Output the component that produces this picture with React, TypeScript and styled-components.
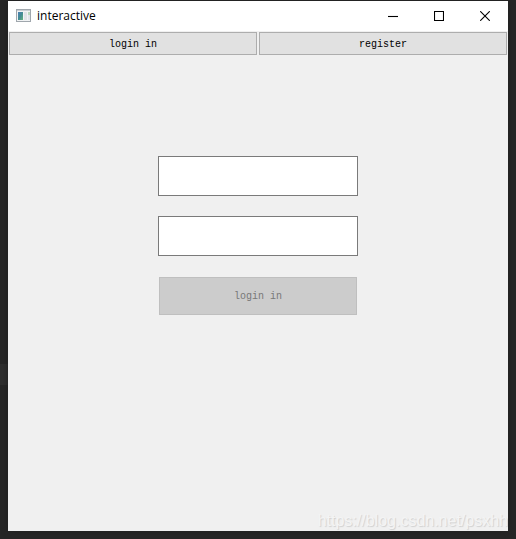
import React from "react";
import styled, { createGlobalStyle } from "styled-components";

const GlobalStyle = createGlobalStyle`
  * { box-sizing: border-box; }
  body { margin: 0; background: #262626; }
`;

const Desktop = styled.div`
  display: flex;
  min-height: 100vh;
  padding: 1px 8px 8px;
  background:
    linear-gradient(#2e2e2e, #2e2e2e) 0 364px / 8px 21px no-repeat,
    #262626;
`;

const AppWindow = styled.main`
  position: relative;
  display: flex;
  flex: 1;
  flex-direction: column;
  min-width: 0;
  overflow: hidden;
  background: #f0f0f0;
  box-shadow: 0 0 6px #1e1e1e;
`;

const TitleBar = styled.header`
  display: flex;
  align-items: center;
  height: 30px;
  padding-left: 8px;
  gap: 5px;
  background: #fff;
`;

const Title = styled.h1`
  flex: 1;
  margin: 0;
  color: #000;
  font: 400 12px/16px "Open Sans", "Noto Sans", sans-serif;
`;

const CaptionGroup = styled.div`
  display: flex;
`;

const Caption = styled.button`
  display: flex;
  align-items: center;
  justify-content: center;
  width: 46px;
  height: 28px;
  padding: 0;
  border: 0;
  background: transparent;
  &:hover { background: #e5e5e5; }
`;

const Tabs = styled.nav`
  display: grid;
  grid-template-columns: 1fr 1fr;
`;

const PushButton = styled.button<{ $tall?: boolean }>`
  height: ${(p) => (p.$tall ? 38 : 23)}px;
  margin: 1px;
  padding: 2px 0 0;
  border: 1px solid #adadad;
  border-radius: 0;
  background: #e1e1e1;
  color: #000;
  font: 400 10px/12px "Liberation Mono", monospace;
  &:disabled {
    border-color: #bfbfbf;
    background: #ccc;
    color: #787878;
  }
`;

const LoginForm = styled.form`
  display: flex;
  flex-direction: column;
  gap: 20px;
  width: 40%;
  margin: 100px auto 0;
`;

const Field = styled.input`
  width: 100%;
  height: 40px;
  padding: 0 4px;
  border: 1px solid #7a7a7a;
  border-radius: 0;
  background: #fff;
  font: 400 12px/16px "Liberation Mono", monospace;
  outline: none;
`;

const Watermark = styled.span`
  position: absolute;
  right: 0;
  bottom: 0;
  color: #f4f4f4;
  font: 400 16px/20px "Liberation Sans", sans-serif;
  text-shadow: 1px 1px 1px #d0d0d0;
  white-space: nowrap;
  pointer-events: none;
`;

function AppIcon() {
  return (
    <svg width="16" height="16" viewBox="0 0 16 16" aria-hidden="true">
      <defs>
        <linearGradient id="pane" x1="0" y1="0" x2="1" y2="1">
          <stop offset="0" stopColor="#4c7fb4" />
          <stop offset="0.5" stopColor="#428b94" />
          <stop offset="1" stopColor="#67b47b" />
        </linearGradient>
      </defs>
      <rect x="0" y="1" width="15" height="13" fill="#a0a7ad" />
      <rect x="1" y="2" width="13" height="11" fill="#f1f3f4" />
      <rect x="1" y="2" width="13" height="1" fill="#c8ced2" />
      <rect x="2" y="4" width="5" height="8" fill="url(#pane)" />
      <rect x="8" y="4" width="3" height="8" fill="#dfe3e6" />
      <rect x="12" y="4" width="2" height="3" fill="#b9d8bd" />
      <rect x="12" y="7" width="2" height="5" fill="#e1e4ea" />
    </svg>
  );
}

const captionButtons = [
  { label: "Minimize", path: "M0 5.5H10" },
  { label: "Maximize", path: "M0.5 0.5H9.5V9.5H0.5Z" },
  { label: "Close", path: "M0.2 0.2L9.8 9.8M9.8 0.2L0.2 9.8" },
];

export default function App() {
  return (
    <>
      <GlobalStyle />
      <Desktop>
        <AppWindow>
          <TitleBar>
            <AppIcon />
            <Title>interactive</Title>
            <CaptionGroup>
              {captionButtons.map((b) => (
                <Caption key={b.label} type="button" aria-label={b.label}>
                  <svg width="10" height="10" viewBox="0 0 10 10" fill="none" stroke="#000" strokeWidth="1.1">
                    <path d={b.path} />
                  </svg>
                </Caption>
              ))}
            </CaptionGroup>
          </TitleBar>
          <Tabs>
            <PushButton type="button">login in</PushButton>
            <PushButton type="button">register</PushButton>
          </Tabs>
          <LoginForm>
            <Field type="text" aria-label="User name" />
            <Field type="password" aria-label="Password" />
            <PushButton type="submit" $tall disabled>
              login in
            </PushButton>
          </LoginForm>
          <Watermark>https://blog.csdn.net/psxhh</Watermark>
        </AppWindow>
      </Desktop>
    </>
  );
}
